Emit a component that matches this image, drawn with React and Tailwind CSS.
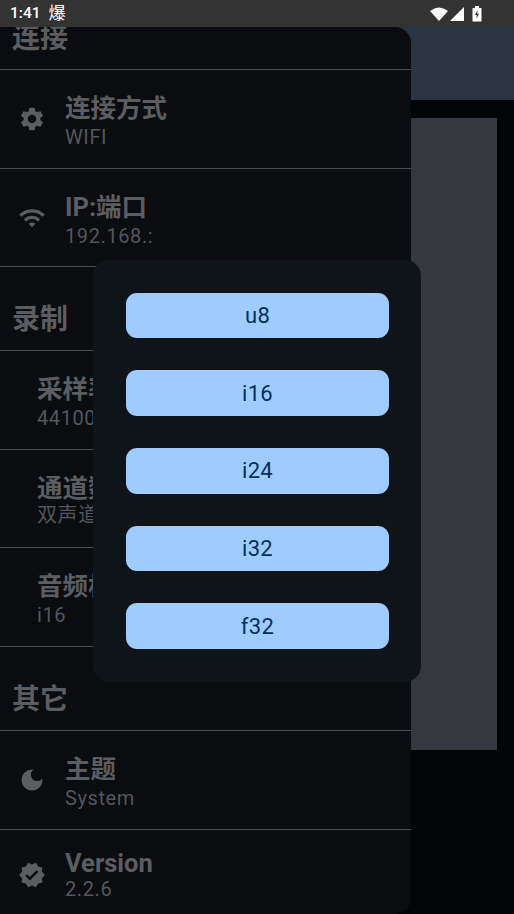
import { MdSettings, MdWifi, MdDarkMode, MdVerified } from 'react-icons/md'

const font = "font-['Roboto','Noto_Sans_CJK_SC',sans-serif]"
const hasCjk = (s) => /[^\x00-\x7F]/.test(s)

function SectionHeader({ title, clipped }) {
  return (
    <div className={`flex items-center border-b border-[#4a4b4f] pl-[12px] ${clipped ? 'h-[43px] pb-[18px]' : 'h-[84px] pt-[23px]'}`}>
      <span className="text-[28px] leading-none font-bold text-[#5c5d61]">{title}</span>
    </div>
  )
}

function Row({ icon: Icon, title, sub }) {
  return (
    <div className={`h-[98.6px] border-b border-[#4a4b4f] pt-[18px] ${Icon ? 'pl-[18px]' : 'pl-[37px]'}`}>
      <div className="flex items-center">
        {Icon && <Icon size={28} className="mt-[2px] mr-[19px] shrink-0 text-[#5c5d61]" />}
        <div className="flex flex-col">
          <span className={`text-[25.5px] font-bold whitespace-nowrap text-[#5c5d61] ${hasCjk(title) ? 'mt-[2px] leading-[36px]' : 'leading-[30px]'}`}>{title}</span>
          <span className={`text-[20px] leading-[22px] tracking-[0.6px] whitespace-nowrap text-[#55565a] ${hasCjk(sub) ? '-mt-[2px]' : ''}`}>{sub}</span>
        </div>
      </div>
    </div>
  )
}

function StatusBar() {
  return (
    <div className="flex h-[27px] items-center justify-between bg-[#333333] pr-[32px] pl-[10px]">
      <div className="flex items-center gap-[8px] text-[15.5px] font-medium text-white">
        <span>1:41</span>
        <span className="text-[17px] font-normal">爆</span>
      </div>
      <div className="flex items-center">
        <svg width="18" height="14" viewBox="0 0 18 14"><path d="M0 4 Q9 -3 18 4 L9 14 Z" fill="#fff" /></svg>
        <svg width="14" height="14" viewBox="0 0 14 14" className="ml-[2px]"><path d="M14 0 V14 H0 Z" fill="#fff" /></svg>
        <svg width="10" height="16" viewBox="0 0 10 16" className="ml-[8px]">
          <path d="M3 0 H7 V2 H9.5 V15.5 H0.5 V2 H3 Z" fill="#fff" />
          <path d="M5.6 4 L3 9 H4.8 L4.3 13 L7 7.8 H5.2 Z" fill="#333" />
        </svg>
      </div>
    </div>
  )
}

function FormatDialog() {
  const formats = ['u8', 'i16', 'i24', 'i32', 'f32']
  return (
    <div className="absolute top-[233px] left-[93px] flex h-[422px] w-[328px] flex-col gap-[32.2px] rounded-[16px] bg-[#0f1418] pt-[32.7px] pr-[32px] pl-[33px]">
      {formats.map((f) => (
        <button
          key={f}
          type="button"
          className="flex h-[45.5px] items-center justify-center rounded-[11px] bg-[#a0cbff] text-[22px] tracking-[0.3px] text-[#003258]"
        >
          {f}
        </button>
      ))}
    </div>
  )
}

export default function App() {
  return (
    <div className={`flex h-[914px] w-[514px] flex-col overflow-hidden bg-[#030405] ${font}`}>
      <StatusBar />
      <div className="relative flex-1">
        {/* page behind the drawer */}
        <div className="h-[73px] bg-[#2a3542]" />
        <div className="mt-[18px] mr-[17px] ml-auto h-[632px] w-[86px] bg-[#363840]" />

        {/* settings drawer, scrolled a little */}
        <div className="absolute top-0 bottom-0 left-0 w-[411px] overflow-hidden rounded-r-[16px] bg-[#0a0c10]">
          <SectionHeader title="连接" clipped />
          <Row icon={MdSettings} title="连接方式" sub="WIFI" />
          <Row icon={MdWifi} title="IP:端口" sub="192.168.:" />
          <SectionHeader title="录制" />
          <Row title="采样率" sub="44100" />
          <Row title="通道数" sub="双声道" />
          <Row title="音频格式" sub="i16" />
          <SectionHeader title="其它" />
          <Row icon={MdDarkMode} title="主题" sub="System" />
          <Row icon={MdVerified} title="Version" sub="2.2.6" />
        </div>

        <FormatDialog />
      </div>
    </div>
  )
}
